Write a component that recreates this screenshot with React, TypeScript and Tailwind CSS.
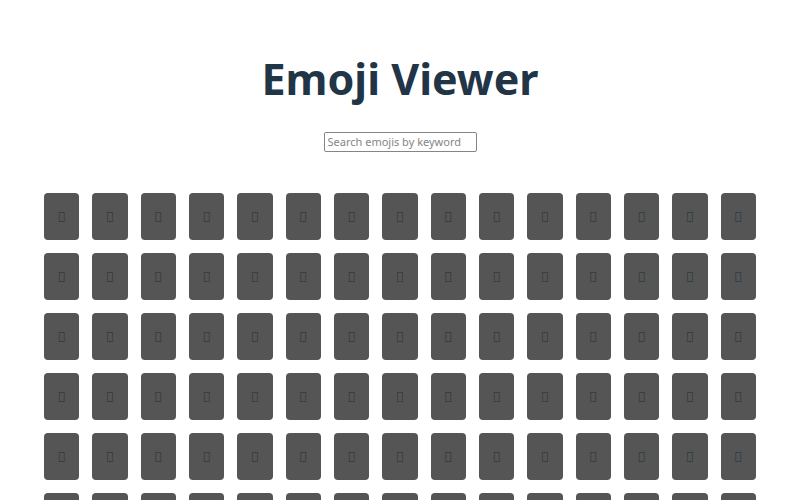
const glyphs: string[] = Array.from({ length: 90 }, () => "\uE000");

export default function App() {
  return (
    <main className="h-screen overflow-hidden bg-white px-11 pt-12 text-center font-['Noto_Sans',sans-serif] text-[#213547]">
      <h1 className="text-[43px] leading-[62px] font-bold text-[#213547]">Emoji Viewer</h1>
      <input
        type="text"
        aria-label="Search emojis by keyword"
        placeholder="Search emojis by keyword"
        className="mt-[22px] h-5 w-[153px] rounded-xs border border-[#858585] px-[3px] pb-px text-[11px] placeholder:text-[#858585]"
      />
      <ul className="mt-[41px] grid grid-cols-15 gap-[13px]">
        {glyphs.map((glyph, i) => (
          <li
            key={i}
            className="flex h-[47px] items-center justify-center rounded-sm bg-[#555555] text-[14px] text-[#2f3b45]"
          >
            {glyph}
          </li>
        ))}
      </ul>
    </main>
  );
}
